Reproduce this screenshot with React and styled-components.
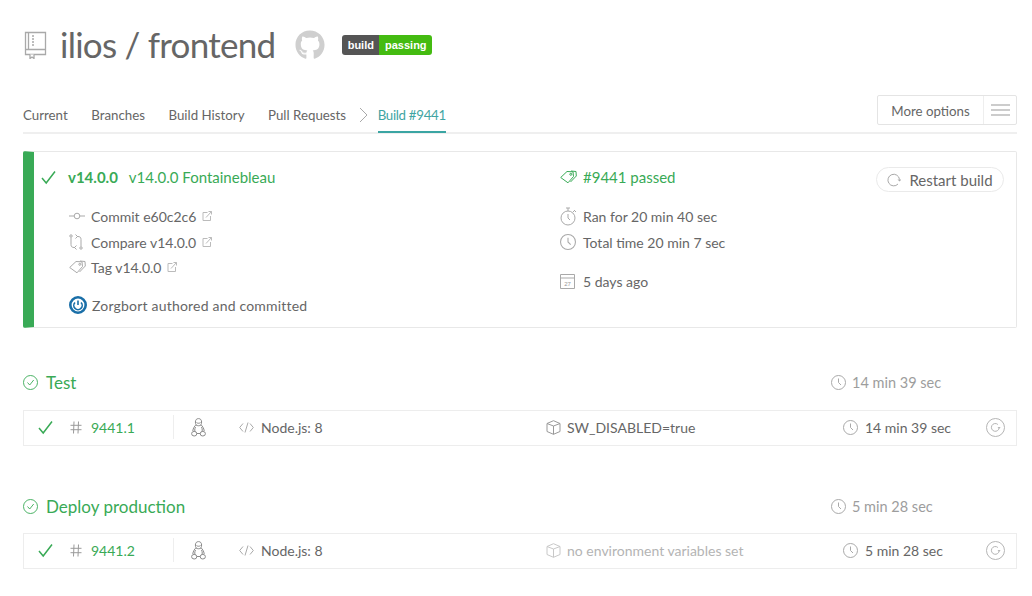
import React from "react";
import styled, { createGlobalStyle } from "styled-components";
import { FaGithub } from "react-icons/fa";

const Global = createGlobalStyle`
  html, body { margin: 0; padding: 0; background: #fff; }
  body { font-family: Lato, "Noto Sans", sans-serif; color: #666; }
  * { box-sizing: border-box; }
`;

const Page = styled.div`
  width: 1032px;
  height: 596px;
  overflow: hidden;
  padding: 0 15px 0 23px;
`;
const Header = styled.header`
  height: 92px;
  padding-bottom: 2px;
  display: flex;
  align-items: center;
`;
const Title = styled.h1`
  margin: 0 20px 3px 13px;
  font-size: 35px;
  line-height: 40px;
  font-weight: 400;
  letter-spacing: -0.75px;
  color: #666;
  white-space: nowrap;
`;
const Badge = styled.div`
  margin-left: 17px;
  display: flex;
  height: 20px;
  border-radius: 3px;
  overflow: hidden;
  font: 700 11px/20px "Liberation Sans", sans-serif;
  color: #fff;
`;
const BadgePart = styled.span`
  width: ${p => p.$w}px;
  text-align: center;
  background: ${p => p.$bg};
`;
const Nav = styled.nav`
  height: 42px;
  display: flex;
  align-items: center;
  border-bottom: 2px solid #efefef;
`;
const NavItem = styled.a`
  font-size: 13.3px;
  line-height: 48px;
  height: 42px;
  margin-right: 23.500px;
  letter-spacing: ${p => (p.$active ? "-0.3px" : "0")};
  color: ${p => (p.$active ? "#3fa5a3" : "#666")};
  border-bottom: 2px solid ${p => (p.$active ? "#3ba5a3" : "transparent")};
`;
const Crumb = styled.svg`
  margin: 6px 9px 0 -11px;
`;
const More = styled.div`
  margin-left: auto;
  margin-bottom: 5px;
  width: 140px;
  height: 30px;
  display: flex;
  border: 1px solid #e4e4e4;
  border-radius: 2px;
  font-size: 13.3px;
`;
const MoreLabel = styled.span`
  flex: 1;
  line-height: 31px;
  text-align: center;
  color: #666;
  border-right: 1px solid #eee;
`;
const MoreIcon = styled.span`
  width: 32px;
  display: flex;
  align-items: center;
  justify-content: center;
`;
const Card = styled.section`
  margin-top: 17px;
  height: 177px;
  border: 1px solid #e8e8e8;
  border-left: 11px solid #39aa56;
  border-radius: 2px;
  display: grid;
  grid-template-columns: 526px 1fr;
`;
const Col = styled.div`
  padding: 14px 0 0 ${p => p.$pad}px;
  position: relative;
`;
const Headline = styled.div`
  display: flex;
  align-items: center;
  height: 22px;
  font-size: 15px;
  color: #39aa56;
  white-space: nowrap;
`;
const Ref = styled.strong`
  font-weight: 700;
  margin: 0 11px 0 12px;
`;
const Details = styled.div`
  padding-left: ${p => p.$indent}px;
`;
const Line = styled.div`
  display: flex;
  align-items: center;
  height: 26px;
  font-size: 14px;
  color: #666;
  margin-top: ${p => p.$mt || 0}px;
  white-space: nowrap;
`;
const Author = styled(Line)`
  letter-spacing: 0.2px;
`;
const IconSlot = styled.span`
  width: ${p => p.$w}px;
  flex: none;
  display: flex;
  align-items: center;
`;
const Ext = styled.svg`
  margin-left: 6px;
`;
const Restart = styled.button`
  position: absolute;
  top: 15px;
  right: 12px;
  width: 128px;
  height: 25px;
  display: flex;
  align-items: center;
  justify-content: center;
  gap: 8px;
  background: #fff;
  border: 1px solid #eaeaea;
  border-radius: 13px;
  font: 400 15px Lato, sans-serif;
  color: #666;
  padding: 0;
`;
const SectionHead = styled.div`
  display: flex;
  align-items: center;
  height: 24px;
  padding-bottom: 2px;
  margin-top: ${p => p.$mt}px;
`;
const SectionName = styled.h2`
  margin: 0 0 0 8px;
  font-size: 17px;
  font-weight: 400;
  color: #39aa56;
  flex: 1;
`;
const SectionTime = styled.div`
  width: 186px;
  display: flex;
  align-items: center;
  gap: 6px;
  font-size: 14.500px;
  color: #9d9d9d;
`;
const Row = styled.div`
  margin-top: ${p => p.$mt}px;
  height: 36px;
  padding-bottom: 2px;
  border: 1px solid #ededed;
  display: flex;
  align-items: center;
  font-size: 14px;
  color: #666;
  white-space: nowrap;
`;
const JobStatus = styled.div`
  width: 150px;
  height: 24px;
  display: flex;
  align-items: center;
  padding-left: 14px;
  border-right: 1px solid #eee;
  color: #39aa56;
`;
const JobOs = styled.div`
  width: 64px;
  padding-left: 17px;
  display: flex;
`;
const JobLang = styled.div`
  width: 307px;
  padding-left: 1px;
  display: flex;
  align-items: center;
  gap: 7px;
`;
const JobEnv = styled.div`
  width: 298px;
  padding-left: 1px;
  display: flex;
  align-items: center;
  gap: 6px;
  color: ${p => (p.$muted ? "#b4b4b4" : "#666")};
`;
const JobTime = styled.div`
  width: 143px;
  display: flex;
  align-items: center;
  gap: 7px;
`;

const G = { fill: "none", stroke: "#a9a9a9", strokeWidth: 1 };

const Book = () => (
  <svg width="24" height="28" viewBox="0 0 24 28" {...G} strokeWidth="1.300">
    <path d="M2.500 1.500h20v22h-20z M5.500 1.500v17 M2.500 18.500h20" />
    <path d="M9 5h2 M9 8h2 M9 11h2 M9 14h2" />
    <path d="M7 23.500v4l2-1.500 2 1.500v-4" fill="#fff" />
  </svg>
);
const Check = ({ s = 15 }) => (
  <svg width={s} height={s} viewBox="0 0 15 15" fill="none" stroke="#39aa56" strokeWidth="1.500">
    <path d="M1 8l4.200 5L14 1.500" />
  </svg>
);
const Link = () => (
  <Ext width="10" height="10" viewBox="0 0 10 10" {...G} stroke="#bbb">
    <path d="M5.500 1.500H1v8h7.500V5 M4 6.500L9.500.5 M6.500.5h3v3" />
  </Ext>
);
const Commit = () => (
  <svg width="16" height="10" viewBox="0 0 16 10" {...G}>
    <circle cx="8" cy="5" r="2.800" />
    <path d="M0 5h5 M11 5h5" />
  </svg>
);
const Compare = () => (
  <svg width="14" height="16" viewBox="0 0 14 16" {...G}>
    <circle cx="2" cy="2" r="1.200" />
    <circle cx="12" cy="14" r="1.200" />
    <path d="M2 3.500v7c0 2 1 3 3 3h1 M12 12.500v-7c0-2-1-3-3-3H8 M7.500 11.500l-2 2 2 2 M6.500.500l2 2-2 2" />
  </svg>
);
const Tag = ({ c = "#a9a9a9" }) => (
  <svg width="17" height="14" viewBox="0 0 17 14" fill="none" stroke={c} strokeWidth="1">
    <path d="M.7 7.500L7 1.500l6 .3.5 4.700L8 12.800z" />
    <path d="M11 1l5 .5.300 4.500-5.800 6" />
    <circle cx="10.800" cy="4.300" r="1" />
  </svg>
);
const Power = () => (
  <svg width="18" height="18" viewBox="0 0 18 18">
    <circle cx="9" cy="9" r="7.700" fill="#fff" stroke="#1a6fa8" strokeWidth="2.600" />
    <path d="M6 6.500a4.200 4.200 0 1 0 6 0" fill="none" stroke="#1a6fa8" strokeWidth="1.600" />
    <path d="M9 4.500v4.500" stroke="#1a6fa8" strokeWidth="1.600" />
  </svg>
);
const Stopwatch = () => (
  <svg width="17" height="19" viewBox="0 0 17 19" {...G}>
    <circle cx="8" cy="11" r="7" />
    <path d="M6 1h4 M8 1v3 M14 3l2 2 M13 5l1.500-1.500 M8 7v4l2 2" />
  </svg>
);
const Clock = ({ s = 15 }) => (
  <svg width={s} height={s} viewBox="0 0 15 15" {...G}>
    <circle cx="7.500" cy="7.500" r="7" />
    <path d="M7.500 3.500v4l2.500 2.500" />
  </svg>
);
const Calendar = () => (
  <svg width="15" height="16" viewBox="0 0 15 16" {...G}>
    <path d="M.5 1.500h14v14H.5z M.5 5h14" />
    <text x="7.500" y="13" fontSize="6" textAnchor="middle" fill="#999" stroke="none" fontFamily="Liberation Sans">27</text>
  </svg>
);
const Refresh = () => (
  <svg width="14" height="14" viewBox="0 0 14 14" {...G}>
    <path d="M12.500 6.500A5.800 5.800 0 1 0 11 11" />
    <path d="M10.500 6.500h4l-2 2z" fill="#aaa" stroke="none" />
  </svg>
);
const RestartJob = () => (
  <svg width="19" height="19" viewBox="0 0 19 19" {...G} stroke="#b5b5b5">
    <circle cx="9.500" cy="9.500" r="9" />
    <path d="M13.200 9.500a3.900 3.900 0 1 1-1.300-3" />
    <path d="M11.500 9h3.200l-1.600 1.800z" fill="#b5b5b5" stroke="none" />
  </svg>
);
const Ok = () => (
  <svg width="15" height="15" viewBox="0 0 15 15" fill="none" stroke="#39aa56" strokeWidth="0.900">
    <circle cx="7.500" cy="7.500" r="7" />
    <path d="M4.500 7.500l2.200 2.500 4-5" />
  </svg>
);
const Hash = () => (
  <svg width="12" height="13" viewBox="0 0 12 13" {...G} stroke="#9a9a9a">
    <path d="M4 .5L3.500 12.500 M8.500.5L8 12.500 M.5 4.300h11 M.5 8.700h11" />
  </svg>
);
const Tux = () => (
  <svg width="15" height="19" viewBox="0 0 15 19" {...G} stroke="#8a8a8a">
    <path d="M7.500.6C5.500.6 4.400 2 4.400 4c0 1.200.3 2 .6 2.800 -1.300 1.200-3 3.500-3.200 6.200 M7.500.6c2 0 3.100 1.400 3.100 3.400 0 1.200-.3 2-.6 2.800 1.300 1.200 3 3.500 3.200 6.200" />
    <path d="M5.500 4.500c1 1 3 1 4 0 M5 7c1.500 1 3.500 1 5 0 M4.500 9c-1 2-1 4 0 6.500h6c1-2.500 1-4.500 0-6.500" />
    <ellipse cx="3.200" cy="15.700" rx="2.600" ry="2.300" fill="#fff" />
    <ellipse cx="11.800" cy="15.700" rx="2.600" ry="2.300" fill="#fff" />
  </svg>
);
const Code = () => (
  <svg width="15" height="11" viewBox="0 0 15 11" {...G}>
    <path d="M4 1.500L.7 5.500 4 9.500 M11 1.500l3.300 4-3.300 4 M9 .5L6 10.500" />
  </svg>
);
const Cube = ({ c = "#999" }) => (
  <svg width="15" height="15" viewBox="0 0 15 15" fill="none" stroke={c} strokeWidth="1">
    <path d="M1 3.500L7.500.7 14 3.500v8L7.500 14.300 1 11.500z M1 3.500l6.500 2.500L14 3.500 M7.500 6v8.300" />
  </svg>
);

const Job = ({ num, env, muted, time, mt }) => (
  <Row $mt={mt}>
    <JobStatus>
      <IconSlot $w={32}><Check /></IconSlot>
      <IconSlot $w={21}><Hash /></IconSlot>
      {num}
    </JobStatus>
    <JobOs><Tux /></JobOs>
    <JobLang><Code />Node.js: 8</JobLang>
    <JobEnv $muted={muted}><Cube c={muted ? "#c8c8c8" : "#999"} />{env}</JobEnv>
    <JobTime><Clock />{time}</JobTime>
    <RestartJob />
  </Row>
);

export default function App() {
  return (
    <Page>
      <Global />
      <Header>
        <Book />
        <Title>ilios / frontend</Title>
        <FaGithub size={30} color="#cfcfcf" />
        <Badge>
          <BadgePart $bg="#555" $w={37}>build</BadgePart>
          <BadgePart $bg="#44bb11" $w={53}>passing</BadgePart>
        </Badge>
      </Header>
      <Nav>
        <NavItem>Current</NavItem>
        <NavItem>Branches</NavItem>
        <NavItem>Build History</NavItem>
        <NavItem>Pull Requests</NavItem>
        <Crumb width="10" height="16" viewBox="0 0 10 16" {...G}><path d="M1 1l7 7-7 7" /></Crumb>
        <NavItem $active>Build #9441</NavItem>
        <More>
          <MoreLabel>More options</MoreLabel>
          <MoreIcon>
            <svg width="19" height="12" viewBox="0 0 19 12" {...G} stroke="#999"><path d="M0 1h19 M0 6h19 M0 11h19" /></svg>
          </MoreIcon>
        </More>
      </Nav>
      <Card>
        <Col $pad={7}>
          <Headline>
            <Check />
            <Ref>v14.0.0</Ref>
            v14.0.0 Fontainebleau
          </Headline>
          <Details $indent={28}>
            <Line $mt={15}><IconSlot $w={22} ><Commit /></IconSlot>Commit e60c2c6<Link /></Line>
            <Line><IconSlot $w={22}><Compare /></IconSlot>Compare v14.0.0<Link /></Line>
            <Line $mt={-1}><IconSlot $w={22}><Tag /></IconSlot>Tag v14.0.0<Link /></Line>
            <Author $mt={12}><IconSlot $w={23}><Power /></IconSlot>Zorgbort authored and committed</Author>
          </Details>
        </Col>
        <Col $pad={0}>
          <Headline>
            <IconSlot $w={23}><Tag c="#39aa56" /></IconSlot>
            #9441 passed
          </Headline>
          <Line $mt={15}><IconSlot $w={23}><Stopwatch /></IconSlot>Ran for 20 min 40 sec</Line>
          <Line><IconSlot $w={23}><Clock s={16} /></IconSlot>Total time 20 min 7 sec</Line>
          <Line $mt={13}><IconSlot $w={23}><Calendar /></IconSlot>5 days ago</Line>
          <Restart><Refresh />Restart build</Restart>
        </Col>
      </Card>
      <SectionHead $mt={43}>
        <Ok />
        <SectionName>Test</SectionName>
        <SectionTime><Clock />14 min 39 sec</SectionTime>
      </SectionHead>
      <Job mt={15} num="9441.1" env="SW_DISABLED=true" time="14 min 39 sec" />
      <SectionHead $mt={49}>
        <Ok />
        <SectionName>Deploy production</SectionName>
        <SectionTime><Clock />5 min 28 sec</SectionTime>
      </SectionHead>
      <Job mt={14} num="9441.2" env="no environment variables set" muted time="5 min 28 sec" />
    </Page>
  );
}
